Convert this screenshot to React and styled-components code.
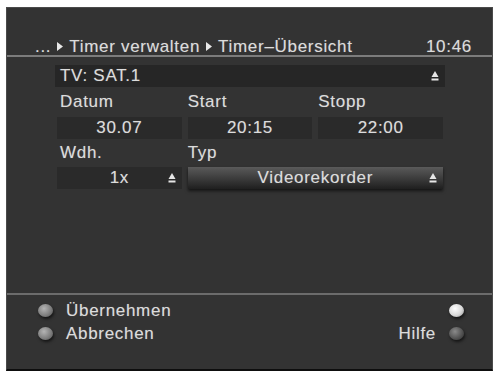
import React from 'react'
import styled, { createGlobalStyle } from 'styled-components'

const GlobalStyle = createGlobalStyle`
  html, body {
    margin: 0;
    padding: 0;
    background: #fff;
  }
  body {
    font-family: "Liberation Sans", Arial, sans-serif;
  }
`

const Page = styled.div`
  width: 496px;
  height: 376px;
  padding: 7px 0 0 6px;
  box-sizing: border-box;
`

const Screen = styled.div`
  width: 487px;
  height: 364px;
  box-sizing: border-box;
  background: #333;
  border: 1px solid #4a4a4a;
  border-bottom: 2px solid #0e0e0e;
  display: flex;
  flex-direction: column;
  color: #dcdcdc;
  font-size: 17px;
  letter-spacing: 0.7px;
  text-shadow: 0 0 1px rgba(255, 255, 255, 0.3);
`

const Header = styled.div`
  height: 49px;
  box-sizing: border-box;
  padding: 29px 20px 0 28px;
  display: flex;
  justify-content: space-between;
  line-height: 19px;
  border-bottom: 2px solid #7c7c7c;
`

const Crumbs = styled.div`
  display: flex;
  align-items: center;
  gap: 6px;
`

const Content = styled.div`
  flex: 1;
  padding: 8px 0 0 50px;
  width: 386px;
`

const SelectBar = styled.div`
  position: relative;
  margin: 0 -2px;
  height: 22px;
  background: #262626;
  display: flex;
  align-items: center;
  padding: 0 6px 0 5px;
  box-sizing: border-box;
`

const Grid = styled.div`
  display: grid;
  grid-template-columns: repeat(3, 1fr);
  column-gap: 6px;
`

const Label = styled.div`
  height: ${(p) => p.$h}px;
  line-height: ${(p) => p.$h}px;
  padding-left: ${(p) => p.$pad || 0}px;
`

const ValueBox = styled.div`
  grid-column: ${(p) => p.$span || 'auto'};
  height: 22px;
  background: ${(p) => (p.$active ? 'linear-gradient(#5a5a5a, #3a3a3a 55%, #1f1f1f)' : '#2a2a2a')};
  box-shadow: ${(p) => (p.$active ? '0 2px 3px rgba(0,0,0,0.6)' : 'none')};
  display: flex;
  align-items: center;
  justify-content: center;
  position: relative;
`

const Arrow = styled.span`
  position: absolute;
  right: ${(p) => p.$right || 8}px;
  top: 6px;
  display: flex;
`

const Footer = styled.div`
  border-top: 2px solid #6c6c6c;
  padding: 4px 28px 24px 31px;
  display: flex;
  flex-direction: column;
`

const FootRow = styled.div`
  height: 23px;
  display: flex;
  align-items: center;
  justify-content: space-between;
`

const Key = styled.div`
  display: flex;
  align-items: center;
  gap: 13px;
`

const Ball = styled.span`
  width: 15px;
  height: 13px;
  border-radius: 50%;
  display: inline-block;
  background: ${(p) =>
    p.$tone === 'white'
      ? 'radial-gradient(circle at 40% 35%, #ffffff, #d8d8d8 55%, #8a8a8a)'
      : p.$tone === 'dark'
      ? 'radial-gradient(circle at 40% 35%, #8a8a8a, #555 55%, #2a2a2a)'
      : 'radial-gradient(circle at 40% 35%, #b4b4b4, #808080 55%, #4e4e4e)'};
  box-shadow: 1px 2px 3px rgba(0, 0, 0, 0.6);
`

const Tri = () => (
  <svg width="6" height="9" viewBox="0 0 6 9">
    <path d="M0 0 L6 4.5 L0 9 Z" fill="#e8e8e8" />
  </svg>
)

const UpDown = () => (
  <svg width="8" height="10" viewBox="0 0 8 10">
    <path d="M4 0 L7.5 6 L0.5 6 Z" fill="#e6e6e6" />
    <rect x="0.5" y="7.5" width="7" height="2" fill="#e6e6e6" />
  </svg>
)

export default function App() {
  return (
    <>
      <GlobalStyle />
      <Page>
        <Screen>
          <Header>
            <Crumbs>
              <span>...</span>
              <Tri />
              <span>Timer verwalten</span>
              <Tri />
              <span>Timer–Übersicht</span>
            </Crumbs>
            <span>10:46</span>
          </Header>
          <Content>
            <SelectBar>
              <span>TV: SAT.1</span>
              <Arrow $right={6}>
                <UpDown />
              </Arrow>
            </SelectBar>
            <Grid>
              <Label $h={30} $pad={3}>Datum</Label>
              <Label $h={30}>Start</Label>
              <Label $h={30}>Stopp</Label>
              <ValueBox>30.07</ValueBox>
              <ValueBox>20:15</ValueBox>
              <ValueBox>22:00</ValueBox>
              <Label $h={28} $pad={3}>Wdh.</Label>
              <Label $h={28}>Typ</Label>
              <span />
              <ValueBox>
                1x
                <Arrow $right={6}>
                  <UpDown />
                </Arrow>
              </ValueBox>
              <ValueBox $span="2 / 4" $active>
                Videorekorder
                <Arrow $right={6}>
                  <UpDown />
                </Arrow>
              </ValueBox>
            </Grid>
          </Content>
          <Footer>
            <FootRow>
              <Key>
                <Ball />
                <span>Übernehmen</span>
              </Key>
              <Ball $tone="white" />
            </FootRow>
            <FootRow>
              <Key>
                <Ball />
                <span>Abbrechen</span>
              </Key>
              <Key>
                <span>Hilfe</span>
                <Ball $tone="dark" />
              </Key>
            </FootRow>
          </Footer>
        </Screen>
      </Page>
    </>
  )
}
